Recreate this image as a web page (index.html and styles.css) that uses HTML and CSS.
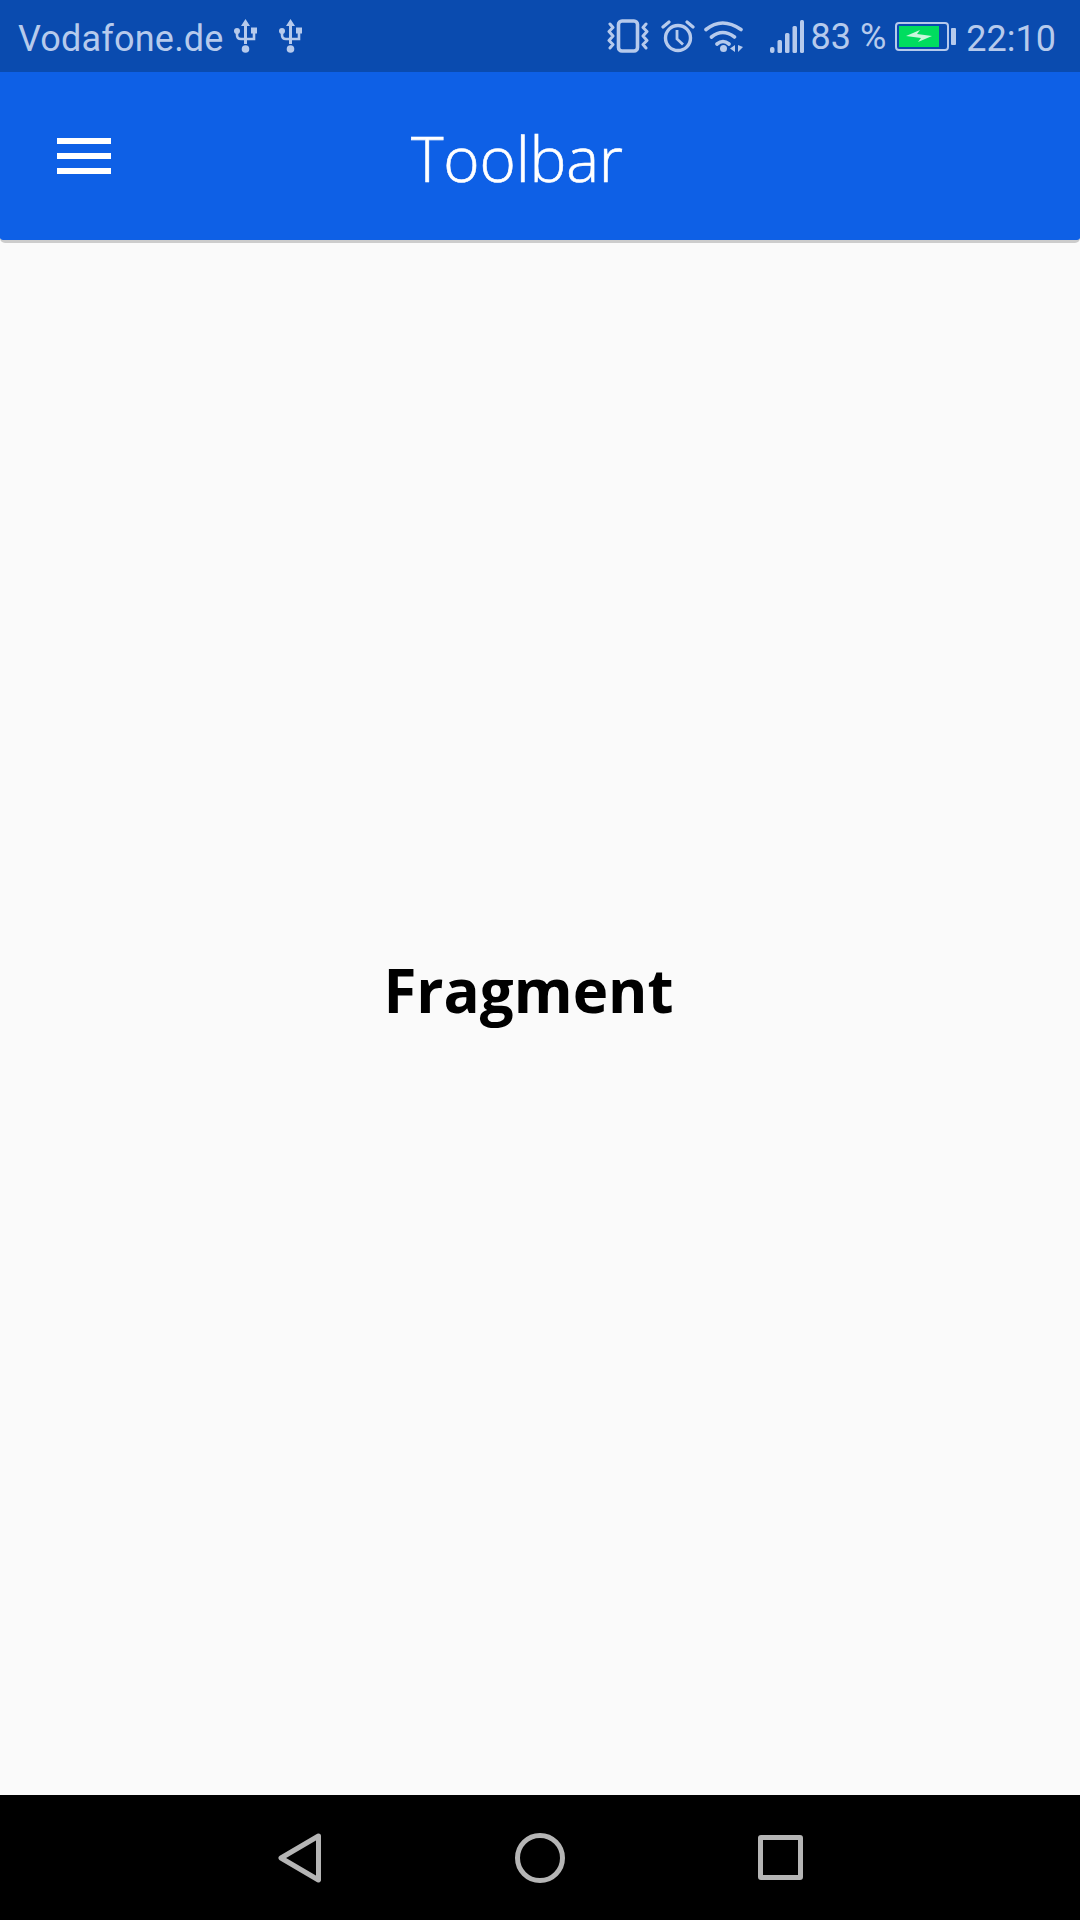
FILE: index.html
```html
<!DOCTYPE html>
<html lang="en">
<head>
    <meta charset="UTF-8">
    <meta name="viewport" content="width=device-width, initial-scale=1.0">
    <title>Toolbar</title>
    <link rel="stylesheet" href="styles.css">
</head>
<body>
    <div class="screen">
        <div class="status-bar">
            <div class="status-left">
                <span class="carrier">Vodafone.de</span>
                <svg class="icon-usb" viewBox="0 0 23 34">
                    <path d="M11.5 0l4.5 7h-3v18h-3V7H7z" fill="currentColor"/>
                    <circle cx="11.5" cy="30" r="3.8" fill="currentColor"/>
                    <path d="M3 13v3q0 4 4 4h13q0-1 0-7" fill="none" stroke="currentColor" stroke-width="2.6"/>
                    <circle cx="3" cy="12" r="3" fill="currentColor"/>
                    <rect x="17" y="8.500" width="6" height="6" fill="currentColor"/>
                </svg>
                <svg class="icon-usb usb-second" viewBox="0 0 23 34">
                    <path d="M11.5 0l4.5 7h-3v18h-3V7H7z" fill="currentColor"/>
                    <circle cx="11.5" cy="30" r="3.8" fill="currentColor"/>
                    <path d="M3 13v3q0 4 4 4h13q0-1 0-7" fill="none" stroke="currentColor" stroke-width="2.6"/>
                    <circle cx="3" cy="12" r="3" fill="currentColor"/>
                    <rect x="17" y="8.500" width="6" height="6" fill="currentColor"/>
                </svg>
            </div>
            <div class="status-right">
                <svg class="icon-vibrate" viewBox="0 0 42 34">
                    <rect x="11.500" y="2" width="19" height="30" rx="3.500" fill="none" stroke="currentColor" stroke-width="3.600"/>
                    <path d="M3 5l3 3.500-4 4 4 4.500-4 4.500 4 4-3 3.500M39 5l-3 3.500 4 4-4 4.500 4 4.500-4 4 3 3.500" fill="none" stroke="currentColor" stroke-width="3" stroke-linecap="round" stroke-linejoin="round"/>
                </svg>
                <svg class="icon-alarm" viewBox="0 0 34 34">
                    <circle cx="17" cy="19" r="12.500" fill="none" stroke="currentColor" stroke-width="3.400"/>
                    <path d="M16 11v9l6 5.500" fill="none" stroke="currentColor" stroke-width="2.800"/>
                    <path d="M2 8l6-5M32 8l-6-5" fill="none" stroke="currentColor" stroke-width="3.200" stroke-linecap="round"/>
                </svg>
                <svg class="icon-wifi" viewBox="0 0 40 33">
                    <path d="M2 9.500q16-13 35 0M7.500 17q11-9 23 0M13 24q6-5 12 0" fill="none" stroke="currentColor" stroke-width="3.600" stroke-linecap="round"/>
                    <circle cx="19.500" cy="28.500" r="3.500" fill="currentColor"/>
                    <path d="M31 25v7l-5-3.500zM34 25v7l5-5z" fill="currentColor"/>
                </svg>
                <svg class="icon-signal" viewBox="0 0 34 33">
                    <g fill="currentColor">
                        <rect x="0" y="27" width="4.500" height="6" rx="2"/>
                        <rect x="7.500" y="20" width="4.500" height="13" rx="1.500"/>
                        <rect x="15" y="13" width="4.500" height="20" rx="1.500"/>
                        <rect x="22.500" y="6" width="4.500" height="27" rx="1.500"/>
                        <rect x="30" y="0" width="4" height="33" rx="1.500"/>
                    </g>
                </svg>
                <span class="percent">83 %</span>
                <div class="battery">
                    <div class="battery-body">
                        <svg class="battery-bolt" viewBox="0 0 26 14">
                            <path d="M0 7l14-6-3 4 15 2-14 6 3-4z" fill="#c9f7dc"/>
                        </svg>
                    </div>
                    <div class="battery-cap"></div>
                </div>
                <span class="clock">22:10</span>
            </div>
        </div>

        <div class="toolbar">
            <div class="menu-icon">
                <span></span>
                <span></span>
                <span></span>
            </div>
            <div class="toolbar-title">Toolbar</div>
        </div>

        <div class="content">
            <div class="fragment-label">Fragment</div>
        </div>

        <div class="nav-bar">
            <div class="nav-item">
                <svg class="nav-back" viewBox="0 0 44 50">
                    <path d="M40.500 3L3 25l37.500 22z" fill="none" stroke="currentColor" stroke-width="5" stroke-linejoin="round"/>
                </svg>
            </div>
            <div class="nav-item">
                <div class="nav-home"></div>
            </div>
            <div class="nav-item">
                <div class="nav-recent"></div>
            </div>
        </div>
    </div>
</body>
</html>
```

FILE: styles.css
```css
* {
    box-sizing: border-box;
}
body {
    margin: 0;
    background-color: #fafafa;
}
.screen {
    width: 1080px;
    height: 1920px;
    display: flex;
    flex-direction: column;
    overflow: hidden;
}
.status-bar {
    height: 72px;
    flex-shrink: 0;
    display: flex;
    justify-content: space-between;
    align-items: center;
    padding: 0 24px 0 18px;
    background-color: #0a4baf;
    color: #b6caec;
    font-family: Roboto, sans-serif;
    font-size: 36px;
}
.status-left,
.status-right {
    display: flex;
    align-items: center;
}
.carrier {
    margin-right: 10px;
    padding-top: 5px;
    letter-spacing: 0.2px;
}
.icon-usb {
    width: 23px;
    height: 34px;
}
.usb-second {
    margin-left: 22px;
}
.icon-vibrate {
    width: 42px;
    height: 34px;
}
.icon-alarm {
    width: 34px;
    height: 34px;
    margin-left: 12px;
}
.icon-wifi {
    width: 40px;
    height: 33px;
    margin-left: 9px;
}
.icon-signal {
    width: 34px;
    height: 33px;
    margin-left: 26px;
}
.percent {
    margin-left: 7px;
    padding-top: 1px;
}
.battery {
    display: flex;
    align-items: center;
    margin-left: 9px;
}
.battery-body {
    width: 54px;
    height: 29px;
    border: 2px solid #b6caec;
    border-radius: 4px;
    padding: 2px 8px 2px 2px;
    background-color: #00dd5f;
    background-clip: content-box;
    display: flex;
    align-items: center;
    justify-content: center;
}
.battery-bolt {
    width: 26px;
    height: 14px;
}
.battery-cap {
    width: 5px;
    height: 17px;
    margin-left: 2px;
    background-color: #b6caec;
    border-radius: 1px;
}
.clock {
    margin-left: 10px;
    padding-top: 5px;
}
.toolbar {
    height: 171px;
    flex-shrink: 0;
    display: flex;
    align-items: center;
    padding: 0 0 1px 57px;
    background-color: #0e60e6;
    border-radius: 0 0 5px 5px;
    border-bottom: 3px solid #cccccc;
}
.menu-icon {
    width: 54px;
    display: flex;
    flex-direction: column;
    gap: 9px;
}
.menu-icon span {
    display: block;
    height: 6px;
    background-color: #fff;
}
.toolbar-title {
    margin-left: 300px;
    padding-top: 4px;
    color: #fff;
    font-family: "Open Sans", sans-serif;
    font-weight: 300;
    font-size: 62px;
    line-height: 1;
    letter-spacing: -0.2px;
    -webkit-text-stroke: 0.6px #fff;
}
.content {
    flex: 1;
    background-color: #fafafa;
    display: flex;
    justify-content: center;
    padding: 708px 23px 0 0;
}
.fragment-label {
    color: #000;
    font-family: "Open Sans", sans-serif;
    font-weight: 700;
    font-size: 60px;
    line-height: 1.3;
}
.nav-bar {
    height: 125px;
    flex-shrink: 0;
    display: flex;
    justify-content: center;
    align-items: center;
    background-color: #000;
    color: #b5b5b5;
}
.nav-item {
    width: 240px;
    display: flex;
    justify-content: center;
}
.nav-back {
    width: 44px;
    height: 50px;
}
.nav-home {
    width: 50px;
    height: 50px;
    border: 5px solid #b5b5b5;
    border-radius: 50%;
}
.nav-recent {
    width: 45px;
    height: 45px;
    border: 5px solid #b5b5b5;
    border-radius: 3px;
}
```
